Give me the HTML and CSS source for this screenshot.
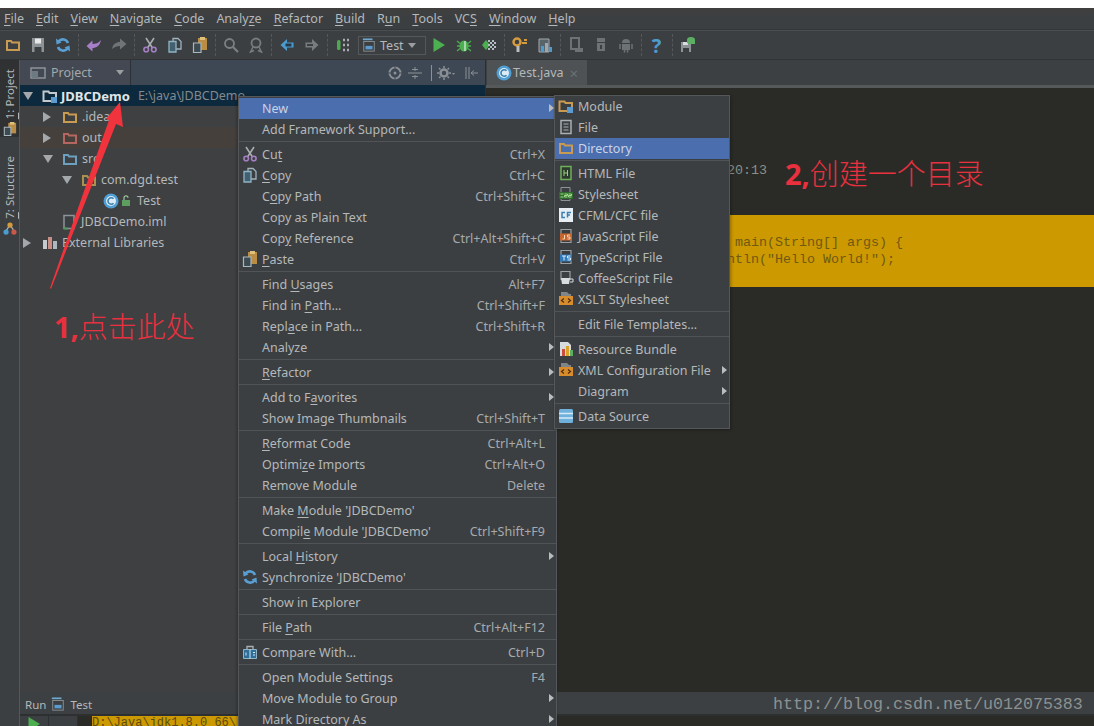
FILE: index.html
```html
<!DOCTYPE html>
<html lang="en">
<head>
    <meta charset="UTF-8">
    <meta name="viewport" content="width=device-width, initial-scale=1.0">
    <title>JDBCDemo - Test.java</title>
    <link rel="stylesheet" href="styles.css">
</head>
<body>
    <svg class="defs" aria-hidden="true">
        <symbol id="i-folder" viewBox="0 0 16 16"><path d="M2 4h4l1 1.5h7V13H2z" fill="none" stroke="currentColor" stroke-width="2"/></symbol>
        <symbol id="i-module" viewBox="0 0 16 16"><path d="M1.5 3.5h5l1 1.5h6.500v8h-12.500z" fill="none" stroke="currentColor" stroke-width="2"/><rect x="9" y="9" width="6" height="6" fill="#5b9bd0"/></symbol>
        <symbol id="i-file" viewBox="0 0 16 16"><path d="M3 1.500h10v13H3z" fill="#3c3f41" stroke="#a9b0b5" stroke-width="1.500"/><path d="M5.500 5h5M5.500 8h5M5.500 11h5" stroke="#a9b0b5"/></symbol>
        <symbol id="i-iml" viewBox="0 0 16 16"><path d="M3 1.500h10v13H3z" fill="#3c3f41" stroke="#8d9498" stroke-width="1.500"/><path d="M3 14.500h4" stroke="#4e9b58" stroke-width="2"/></symbol>
        <symbol id="i-class" viewBox="0 0 16 16"><circle cx="8" cy="8" r="7.500" fill="#4f9fd4"/><circle cx="8" cy="8" r="5" fill="#dcecf6"/><path d="M10.500 5.800a3.200 3.200 0 1 0 0 4.400" fill="none" stroke="#3a7fae" stroke-width="1.600"/></symbol>
        <symbol id="i-lock" viewBox="0 0 12 12"><rect x="2" y="5" width="8" height="6" fill="#5e9e60"/><path d="M4 5V2.800a2 2 0 0 1 4 0" fill="none" stroke="#9cc79b" stroke-width="1.200"/></symbol>
        <symbol id="i-libs" viewBox="0 0 16 16"><rect x="1" y="5" width="4" height="9" fill="#c4ccd2"/><rect x="6" y="2" width="4" height="12" fill="#c88f86"/><rect x="11" y="6" width="4" height="8" fill="#aeb8bf"/></symbol>
        <symbol id="i-cut" viewBox="0 0 16 16"><path d="M4 1l6.500 10M12 1L5.500 11" stroke="#a9adb0" stroke-width="1.600"/><circle cx="4.200" cy="12.500" r="2.300" fill="none" stroke="#a57fc4" stroke-width="1.600"/><circle cx="11.800" cy="12.500" r="2.300" fill="none" stroke="#a57fc4" stroke-width="1.600"/></symbol>
        <symbol id="i-copy" viewBox="0 0 16 16"><path d="M6 1.500h5l3 3V12H6z" fill="#3c3f41" stroke="#9fb2bd" stroke-width="1.300"/><path d="M2 4.500h7V15H2z" fill="#42606f" stroke="#8fb4c6" stroke-width="1.300"/></symbol>
        <symbol id="i-paste" viewBox="0 0 16 16"><rect x="6" y="1" width="9" height="12" fill="#b98d45"/><rect x="8" y="0" width="5" height="3" fill="#e0c078"/><path d="M1.500 6h7.500v9.500H1.500z" fill="#3c4a52" stroke="#a9b7be" stroke-width="1.200"/></symbol>
        <symbol id="i-find" viewBox="0 0 16 16"><circle cx="6.500" cy="6.500" r="4.500" fill="none" stroke="#7b8084" stroke-width="1.800"/><path d="M10 10l5 5" stroke="#7b8084" stroke-width="2.200"/></symbol>
        <symbol id="i-usages" viewBox="0 0 16 16"><circle cx="8" cy="6" r="4.500" fill="none" stroke="#777c80" stroke-width="1.800"/><path d="M5 10l-2.500 5 3.500-1.500M11 10l2.500 5-3.500-1.500" fill="none" stroke="#777c80" stroke-width="1.500"/></symbol>
        <symbol id="i-back" viewBox="0 0 16 16"><path d="M8 2L1.500 8 8 14v-3.500h6.500v-5H8z" fill="#4d9ccf"/><path d="M6.500 6.500h6v3h-6z" fill="#24394a"/></symbol>
        <symbol id="i-forward" viewBox="0 0 16 16"><path d="M8 2l6.500 6L8 14v-3.500H1.500v-5H8z" fill="#777c80"/><path d="M3 7h6v2H3z" fill="#3c3f41"/></symbol>
        <symbol id="i-undo" viewBox="0 0 16 16"><path d="M15 3C14 9 10 11 6.500 11V14.500L.5 9l6-5.500V7C9.500 7 12.500 6 15 3z" fill="#a77fc8"/></symbol>
        <symbol id="i-redo" viewBox="0 0 16 16"><path d="M1 12c1-5 4-7 8-7V1.500L15.500 7 9 12.500V9c-3 0-5.500 1-8 3z" fill="#6f7477"/></symbol>
        <symbol id="i-sync" viewBox="0 0 16 16"><path d="M13 6A5.500 5.500 0 0 0 3.500 4.500M3 10a5.500 5.500 0 0 0 9.500 1.500" fill="none" stroke="#5a9fd4" stroke-width="2.600"/><path d="M1 1.500l.5 6 5-2zM15 14.500l-.5-6-5 2z" fill="#5a9fd4"/></symbol>
        <symbol id="i-save" viewBox="0 0 16 16"><path d="M2 1h12v14H2z" fill="#8d9296"/><rect x="5" y="1.500" width="6" height="5" fill="#e8e8e8"/><rect x="4.500" y="10" width="7" height="5" fill="#3c3f41"/></symbol>
        <symbol id="i-build" viewBox="0 0 16 16"><rect x="1" y="3" width="3.500" height="10" rx="1.500" fill="#4ea84e"/><path d="M7 3h2M11 3h2M7 8h2M11 8h2M7 13h2M11 13h2" stroke="#a9adb0" stroke-width="2.500"/></symbol>
        <symbol id="i-run" viewBox="0 0 16 16"><path d="M2.500 1v14L14 8z" fill="#4caf50"/></symbol>
        <symbol id="i-debug" viewBox="0 0 16 16"><ellipse cx="8" cy="9" rx="4.500" ry="5.500" fill="#4caf50"/><path d="M1 4l3 2.500M15 4l-3 2.500M1 9h3M12 9h3M1 14l3-2.500M15 14l-3-2.500" stroke="#4caf50" stroke-width="1.300"/><path d="M9 4v10" stroke="#c7e3c8" stroke-width="1.500"/></symbol>
        <symbol id="i-cover" viewBox="0 0 16 16"><path d="M1 8l4-5 4 5-4 5z" fill="#4caf50"/><path d="M7 3h2v2H7zM11 3h2v2h-2zM9 5h2v2H9zM13 5h2v2h-2zM7 7h2v2H7zM11 7h2v2h-2zM9 9h2v2H9zM13 9h2v2h-2zM7 11h2v2H7zM11 11h2v2h-2z" fill="#b5bcc2"/></symbol>
        <symbol id="i-wrench" viewBox="0 0 16 16"><circle cx="5" cy="5" r="3.500" fill="none" stroke="#d49a3e" stroke-width="2.500"/><path d="M6 9v6" stroke="#b9bdbf" stroke-width="3"/><path d="M10 6h5M12 3h3" stroke="#d49a3e" stroke-width="2"/></symbol>
        <symbol id="i-struct" viewBox="0 0 16 16"><path d="M2 2h10v13H2z" fill="#59636a" stroke="#a0a8ad"/><rect x="4" y="9" width="3" height="6" fill="#4d9ccf"/><rect x="8" y="6" width="3" height="9" fill="#a0a8ad"/><rect x="12" y="10" width="3" height="5" fill="#4d9ccf"/></symbol>
        <symbol id="i-struct-tab" viewBox="0 0 16 16"><path d="M3 11L8 3l5 8" fill="none" stroke="#a9adb0" stroke-width="1.500"/><circle cx="8" cy="3.500" r="3" fill="#d49a3e"/><circle cx="3.500" cy="11.500" r="3" fill="#4d9ccf"/><circle cx="12.500" cy="11.500" r="3" fill="#c9594a"/></symbol>
        <symbol id="i-sdk" viewBox="0 0 16 16"><path d="M3 1h8v11H3z" fill="none" stroke="#6d7275" stroke-width="2"/><rect x="7" y="11" width="8" height="4" fill="#6d7275"/></symbol>
        <symbol id="i-droid1" viewBox="0 0 16 16"><path d="M4 1h8v4H4z" fill="#6d7275"/><rect x="4" y="6" width="8" height="8" fill="#6d7275"/><path d="M7 8h2v4H7z" fill="#3c3f41"/></symbol>
        <symbol id="i-droid2" viewBox="0 0 16 16"><path d="M4 6a4 4 0 0 1 8 0z" fill="#6d7275"/><rect x="4" y="7" width="8" height="6" fill="#6d7275"/><path d="M2 7v5M14 7v5M6.500 13v2.500M9.500 13v2.500" stroke="#6d7275" stroke-width="1.500"/></symbol>
        <symbol id="i-savedroid" viewBox="0 0 16 16"><path d="M1 5h10v10H1z" fill="#8d9296"/><rect x="3" y="5" width="5" height="3" fill="#ddd"/><rect x="3" y="11" width="6" height="4" fill="#3c3f41"/><path d="M7 6V3a4 3 0 0 1 8 0v4H9z" fill="#5cae62"/></symbol>
        <symbol id="i-html" viewBox="0 0 16 16"><path d="M3 1.500h10v13H3z" fill="#2d3a2e" stroke="#6fae5a" stroke-width="1.500"/><path d="M6 5v6M9.500 5v6M6 8h3.500" stroke="#9ad27c"/></symbol>
        <symbol id="i-css" viewBox="0 0 16 16"><path d="M3 1.500h9v13H3z" fill="#3c3f41" stroke="#8d9498"/><rect x="1" y="6" width="14" height="7" fill="#2f6b2f"/><path d="M2.500 8h3M2.500 11h3M6.500 8h3v1.500h-3v1.500h3M10.500 8h3v1.500h-3v1.500h3" fill="none" stroke="#a5e08c"/></symbol>
        <symbol id="i-cfml" viewBox="0 0 16 16"><rect x="1" y="1" width="14" height="14" fill="#e6eef4"/><path d="M7 5.500H4v5h3M9.500 10.500v-5H13M9.500 8H12" fill="none" stroke="#3c7fb0" stroke-width="1.500"/></symbol>
        <symbol id="i-js" viewBox="0 0 16 16"><path d="M3 1.500h10v13H3z" fill="#3c3f41" stroke="#9a9fa3" stroke-width="1.200"/><rect x="2" y="5.500" width="12" height="7" fill="#c8652c"/><path d="M6.500 7v4H4.500M12 7H9.500v2H12v2H9.500" fill="none" stroke="#f2d6b8"/></symbol>
        <symbol id="i-ts" viewBox="0 0 16 16"><path d="M3 1.500h10v13H3z" fill="#3c3f41" stroke="#9a9fa3" stroke-width="1.200"/><rect x="2" y="5.500" width="12" height="7" fill="#2f79b8"/><path d="M4 7h4M6 7v4.500M12.500 7H9.500v2h3v2h-3" fill="none" stroke="#d9ecfa"/></symbol>
        <symbol id="i-coffee" viewBox="0 0 16 16"><path d="M3 1.500h9v8H3z" fill="#3c3f41" stroke="#9a9fa3" stroke-width="1.200"/><path d="M3 8h9l-1 6H4z" fill="#d7dcdf"/><path d="M12 9h3v3h-3" fill="none" stroke="#d7dcdf"/></symbol>
        <symbol id="i-xslt" viewBox="0 0 16 16"><path d="M3 1h6l2 2h2v3H3z" fill="#7f8589"/><rect x="1" y="5" width="14" height="9" fill="#d98c2b"/><path d="M6 7.500L3.500 9.500 6 11.500M10 7.500l2.500 2-2.500 2" fill="none" stroke="#4a2c0c" stroke-width="1.200"/></symbol>
        <symbol id="i-bundle" viewBox="0 0 16 16"><path d="M2 1h8l3 3v11H2z" fill="#d7dcdf"/><rect x="4" y="8" width="3" height="7" fill="#c94f3c"/><rect x="8" y="5" width="3" height="10" fill="#d9a32c"/><rect x="12" y="9" width="3" height="6" fill="#5cae62"/></symbol>
        <symbol id="i-db" viewBox="0 0 16 16"><rect x="1" y="1" width="14" height="14" rx="1.500" fill="#6fb0dc"/><path d="M1 5.500h14M1 10h14" stroke="#d6ebf8" stroke-width="1.500"/></symbol>
        <symbol id="i-compare" viewBox="0 0 16 16"><path d="M5 5V2.500h6V5" fill="none" stroke="#a9b0b5" stroke-width="1.300"/><path d="M1.500 5.500h13v9h-13z" fill="#2f6f9a" stroke="#8fb4c6"/><path d="M8 5.500v9M4 8.500v3M11 8.500h2M11 11h2" stroke="#d6ebf8"/></symbol>
        <symbol id="i-project" viewBox="0 0 16 16"><path d="M1 3h14v10H1z" fill="none" stroke="#8d9498" stroke-width="1.500"/><rect x="2" y="6" width="6" height="7" fill="#6e7a82"/></symbol>
        <symbol id="i-term" viewBox="0 0 16 16"><path d="M1 1.500h11" stroke="#6ea6cc" stroke-width="2"/><rect x="2" y="4" width="12" height="11" fill="none" stroke="#8d9498"/><rect x="4" y="9" width="8" height="4" fill="#5b9bd0"/></symbol>
        <symbol id="i-target" viewBox="0 0 14 14"><circle cx="7" cy="7" r="5.500" fill="none" stroke="#8b9095" stroke-width="2"/><path d="M7 0v14M0 7h14" stroke="#3e4855"/><circle cx="7" cy="7" r="1.500" fill="#8b9095"/></symbol>
        <symbol id="i-collapse" viewBox="0 0 14 14"><path d="M0 7h14M7 1v4M7 9v4M4 3.500h6M4 10.500h6" stroke="#8b9095"/></symbol>
        <symbol id="i-gear" viewBox="0 0 18 14"><circle cx="7" cy="7" r="3.500" fill="none" stroke="#8b9095" stroke-width="2.500"/><path d="M7 0v14M0 7h14M2 2l10 10M12 2L2 12" stroke="#8b9095" stroke-width="1.500" stroke-dasharray="2 10"/><path d="M15 7h3l-1.500 2z" fill="#8b9095"/></symbol>
        <symbol id="i-hide" viewBox="0 0 14 14"><path d="M2 1v12M5 1v12M7 7h7M7 7l3-2.500M7 7l3 2.500" fill="none" stroke="#8b9095"/></symbol>
    </svg>

    <div class="menubar">
        <span><u>F</u>ile</span>
        <span><u>E</u>dit</span>
        <span><u>V</u>iew</span>
        <span><u>N</u>avigate</span>
        <span><u>C</u>ode</span>
        <span>Analy<u>z</u>e</span>
        <span><u>R</u>efactor</span>
        <span><u>B</u>uild</span>
        <span>R<u>u</u>n</span>
        <span><u>T</u>ools</span>
        <span>VC<u>S</u></span>
        <span><u>W</u>indow</span>
        <span><u>H</u>elp</span>
    </div>

    <div class="toolbar">
        <span class="tb"><svg class="ic ic-orange"><use href="#i-folder"/></svg></span>
        <span class="tb"><svg class="ic"><use href="#i-save"/></svg></span>
        <span class="tb"><svg class="ic"><use href="#i-sync"/></svg></span>
        <span class="tb-sep"></span>
        <span class="tb"><svg class="ic"><use href="#i-undo"/></svg></span>
        <span class="tb"><svg class="ic"><use href="#i-redo"/></svg></span>
        <span class="tb-sep"></span>
        <span class="tb"><svg class="ic"><use href="#i-cut"/></svg></span>
        <span class="tb"><svg class="ic"><use href="#i-copy"/></svg></span>
        <span class="tb"><svg class="ic"><use href="#i-paste"/></svg></span>
        <span class="tb-sep"></span>
        <span class="tb"><svg class="ic"><use href="#i-find"/></svg></span>
        <span class="tb"><svg class="ic"><use href="#i-usages"/></svg></span>
        <span class="tb-sep"></span>
        <span class="tb"><svg class="ic"><use href="#i-back"/></svg></span>
        <span class="tb"><svg class="ic"><use href="#i-forward"/></svg></span>
        <span class="tb-sep"></span>
        <span class="tb tb-build"><svg class="ic"><use href="#i-build"/></svg></span>
        <span class="run-config"><svg class="ic-small"><use href="#i-term"/></svg>Test<i class="caret"></i></span>
        <span class="tb"><svg class="ic"><use href="#i-run"/></svg></span>
        <span class="tb"><svg class="ic"><use href="#i-debug"/></svg></span>
        <span class="tb"><svg class="ic"><use href="#i-cover"/></svg></span>
        <span class="tb-sep"></span>
        <span class="tb"><svg class="ic"><use href="#i-wrench"/></svg></span>
        <span class="tb"><svg class="ic"><use href="#i-struct"/></svg></span>
        <span class="tb-sep"></span>
        <span class="tb"><svg class="ic"><use href="#i-sdk"/></svg></span>
        <span class="tb"><svg class="ic"><use href="#i-droid1"/></svg></span>
        <span class="tb"><svg class="ic"><use href="#i-droid2"/></svg></span>
        <span class="tb-sep"></span>
        <span class="tb help">?</span>
        <span class="tb-sep"></span>
        <span class="tb"><svg class="ic"><use href="#i-savedroid"/></svg></span>
    </div>

    <div class="work">
        <div class="strip">
            <div class="strip-tab active">
                <span class="vtext"><u>1</u>: Project</span>
                <svg class="ic-small"><use href="#i-paste"/></svg>
            </div>
            <div class="strip-tab">
                <span class="vtext"><u>7</u>: Structure</span>
                <svg class="ic-small"><use href="#i-struct-tab"/></svg>
            </div>
        </div>

        <div class="center">
            <div class="panes">
                <div class="project">
                    <div class="project-head">
                        <div class="combo">
                            <svg class="ic"><use href="#i-project"/></svg>
                            <span>Project</span>
                            <i class="caret"></i>
                        </div>
                        <div class="head-tools">
                            <svg class="tool"><use href="#i-target"/></svg>
                            <svg class="tool"><use href="#i-collapse"/></svg>
                            <span class="tool-sep"></span>
                            <svg class="tool tool-wide"><use href="#i-gear"/></svg>
                            <svg class="tool"><use href="#i-hide"/></svg>
                        </div>
                    </div>
                    <div class="tree">
                        <div class="row selected lvl0"><i class="tri down"></i><svg class="ic ic-white"><use href="#i-module"/></svg><b>JDBCDemo</b><span class="path">E:\java\JDBCDemo</span></div>
                        <div class="row lvl1"><i class="tri"></i><svg class="ic ic-orange"><use href="#i-folder"/></svg><span>.idea</span></div>
                        <div class="row lvl1 excluded"><i class="tri"></i><svg class="ic ic-red"><use href="#i-folder"/></svg><span>out</span></div>
                        <div class="row lvl1"><i class="tri down"></i><svg class="ic ic-blue"><use href="#i-folder"/></svg><span>src</span></div>
                        <div class="row lvl2"><i class="tri down"></i><svg class="ic ic-olive"><use href="#i-folder"/></svg><span>com.dgd.test</span></div>
                        <div class="row lvl3"><svg class="ic"><use href="#i-class"/></svg><svg class="ic-lock"><use href="#i-lock"/></svg><span>Test</span></div>
                        <div class="row lvl-file"><svg class="ic"><use href="#i-iml"/></svg><span>JDBCDemo.iml</span></div>
                        <div class="row lvl0"><i class="tri"></i><svg class="ic"><use href="#i-libs"/></svg><span>External Libraries</span></div>
                    </div>
                </div>
                <div class="editor">
                    <div class="tabs">
                        <div class="tab"><svg class="ic"><use href="#i-class"/></svg><span>Test.java</span><span class="tab-x">×</span></div>
                    </div>
                    <div class="code">
                        <div class="stamp">20:13</div>
                        <pre class="highlight"> main(String[] args) {
ntln("Hello World!");</pre>
                    </div>
                </div>
            </div>
            <div class="runbar">
                <span>Run</span>
                <svg class="ic-small"><use href="#i-term"/></svg>
                <span>Test</span>
            </div>
            <div class="console">
                <span class="con-btn"><svg class="ic"><use href="#i-run"/></svg></span>
                <span class="con-btn"></span>
                <span class="con-gap"></span>
                <span class="con-line">D:\Java\jdk1.8.0_66\</span>
            </div>
        </div>
    </div>

    <!-- context menu -->
    <div class="menu main-menu">
        <div class="item on"><span class="label">New</span><i class="arrow"></i></div>
        <div class="item"><span class="label">Add Framework Support...</span></div>
        <div class="sep"></div>
        <div class="item"><svg class="ic item-ic"><use href="#i-cut"/></svg><span class="label">Cu<u>t</u></span><span class="key">Ctrl+X</span></div>
        <div class="item"><svg class="ic item-ic"><use href="#i-copy"/></svg><span class="label"><u>C</u>opy</span><span class="key">Ctrl+C</span></div>
        <div class="item"><span class="label">C<u>o</u>py Path</span><span class="key">Ctrl+Shift+C</span></div>
        <div class="item"><span class="label">Copy as Plain Text</span></div>
        <div class="item"><span class="label">Cop<u>y</u> Reference</span><span class="key">Ctrl+Alt+Shift+C</span></div>
        <div class="item"><svg class="ic item-ic"><use href="#i-paste"/></svg><span class="label"><u>P</u>aste</span><span class="key">Ctrl+V</span></div>
        <div class="sep"></div>
        <div class="item"><span class="label">Find <u>U</u>sages</span><span class="key">Alt+F7</span></div>
        <div class="item"><span class="label">Find in <u>P</u>ath...</span><span class="key">Ctrl+Shift+F</span></div>
        <div class="item"><span class="label">Repl<u>a</u>ce in Path...</span><span class="key">Ctrl+Shift+R</span></div>
        <div class="item"><span class="label">Analyze</span><i class="arrow"></i></div>
        <div class="sep"></div>
        <div class="item"><span class="label"><u>R</u>efactor</span><i class="arrow"></i></div>
        <div class="sep"></div>
        <div class="item"><span class="label">Add to F<u>a</u>vorites</span><i class="arrow"></i></div>
        <div class="item"><span class="label">Show Image Thumbnails</span><span class="key">Ctrl+Shift+T</span></div>
        <div class="sep"></div>
        <div class="item"><span class="label"><u>R</u>eformat Code</span><span class="key">Ctrl+Alt+L</span></div>
        <div class="item"><span class="label">Optimi<u>z</u>e Imports</span><span class="key">Ctrl+Alt+O</span></div>
        <div class="item"><span class="label">Remove Module</span><span class="key">Delete</span></div>
        <div class="sep"></div>
        <div class="item"><span class="label">Make <u>M</u>odule 'JDBCDemo'</span></div>
        <div class="item"><span class="label">Compil<u>e</u> Module 'JDBCDemo'</span><span class="key">Ctrl+Shift+F9</span></div>
        <div class="sep"></div>
        <div class="item"><span class="label">Local <u>H</u>istory</span><i class="arrow"></i></div>
        <div class="item"><svg class="ic item-ic"><use href="#i-sync"/></svg><span class="label">Synchronize 'JDBCDemo'</span></div>
        <div class="sep"></div>
        <div class="item"><span class="label">Show in Explorer</span></div>
        <div class="sep"></div>
        <div class="item"><span class="label">File <u>P</u>ath</span><span class="key">Ctrl+Alt+F12</span></div>
        <div class="sep"></div>
        <div class="item"><svg class="ic item-ic"><use href="#i-compare"/></svg><span class="label">Compare With...</span><span class="key">Ctrl+D</span></div>
        <div class="sep"></div>
        <div class="item"><span class="label">Open Module Settings</span><span class="key">F4</span></div>
        <div class="item"><span class="label">Move Module to Group</span><i class="arrow"></i></div>
        <div class="item"><span class="label">Mark Directory As</span><i class="arrow"></i></div>
    </div>

    <!-- New submenu -->
    <div class="menu sub-menu">
        <div class="item"><svg class="ic item-ic ic-orange"><use href="#i-module"/></svg><span class="label">Module</span></div>
        <div class="item"><svg class="ic item-ic"><use href="#i-file"/></svg><span class="label">File</span></div>
        <div class="item on"><svg class="ic item-ic ic-orange"><use href="#i-folder"/></svg><span class="label">Directory</span></div>
        <div class="sep"></div>
        <div class="item"><svg class="ic item-ic"><use href="#i-html"/></svg><span class="label">HTML File</span></div>
        <div class="item"><svg class="ic item-ic"><use href="#i-css"/></svg><span class="label">Stylesheet</span></div>
        <div class="item"><svg class="ic item-ic"><use href="#i-cfml"/></svg><span class="label">CFML/CFC file</span></div>
        <div class="item"><svg class="ic item-ic"><use href="#i-js"/></svg><span class="label">JavaScript File</span></div>
        <div class="item"><svg class="ic item-ic"><use href="#i-ts"/></svg><span class="label">TypeScript File</span></div>
        <div class="item"><svg class="ic item-ic"><use href="#i-coffee"/></svg><span class="label">CoffeeScript File</span></div>
        <div class="item"><svg class="ic item-ic"><use href="#i-xslt"/></svg><span class="label">XSLT Stylesheet</span></div>
        <div class="sep"></div>
        <div class="item"><span class="label">Edit File Templates...</span></div>
        <div class="sep"></div>
        <div class="item"><svg class="ic item-ic"><use href="#i-bundle"/></svg><span class="label">Resource Bundle</span></div>
        <div class="item"><svg class="ic item-ic"><use href="#i-xslt"/></svg><span class="label">XML Configuration File</span><i class="arrow"></i></div>
        <div class="item"><span class="label">Diagram</span><i class="arrow"></i></div>
        <div class="sep"></div>
        <div class="item"><svg class="ic item-ic"><use href="#i-db"/></svg><span class="label">Data Source</span></div>
    </div>

    <!-- annotations drawn on top of the screenshot -->
    <svg class="red-arrow" viewBox="0 0 80 195"><polygon points="71,1 74,26 67,23 2,188 1,187 60,19 57,18" fill="#f0333c"/></svg>
    <div class="note note-1"><b>1,</b>点击此处</div>
    <div class="note note-2"><b>2,</b>创建一个目录</div>
    <div class="watermark">http://blog.csdn.net/u012075383</div>
</body>
</html>
```

FILE: styles.css
```css
* {
    box-sizing: border-box;
}
html, body {
    height: 100%;
}
body {
    margin: 0;
    padding-top: 8px;
    overflow: hidden;
    background: #fff;
    color: #b4b8ba;
    font-family: "Noto Sans", Arial, sans-serif;
    font-size: 12.5px;
    display: flex;
    flex-direction: column;
}
.defs {
    display: none;
}
u {
    text-underline-offset: 2px;
}
.ic {
    width: 16px;
    height: 16px;
    flex: none;
}
.ic-small {
    width: 14px;
    height: 14px;
    flex: none;
}
.ic-orange { color: #c99a52; }
.ic-red { color: #b5675f; }
.ic-blue { color: #6d9fbe; }
.ic-olive { color: #ab9150; }
.ic-white { color: #c3c9cd; }

/* menu bar */
.menubar {
    height: 22px;
    flex: none;
    display: flex;
    align-items: center;
    gap: 12px;
    padding-left: 4px;
    background: linear-gradient(#413f3e, #3c3f41 40%);
    border-bottom: 1px solid #34373a;
}

/* toolbar */
.toolbar {
    height: 30px;
    flex: none;
    display: flex;
    align-items: center;
    background: #3c3f41;
    border-top: 1px solid #4b4e50;
    border-bottom: 1px solid #313335;
}
.tb {
    width: 25px;
    height: 24px;
    display: flex;
    align-items: center;
    justify-content: center;
    flex: none;
}
.tb-sep {
    width: 3px;
    height: 22px;
    flex: none;
    border-left: 1px dashed #55585a;
    margin-left: 3px;
}
.tb-build {
    width: 22px;
    margin-left: 3px;
}
.help {
    color: #4d9ccf;
    font-size: 20px;
    font-weight: bold;
}
.run-config {
    width: 68px;
    height: 19px;
    margin: 0 0 0 3px;
    padding: 0 3px;
    display: flex;
    align-items: center;
    gap: 4px;
    flex: none;
    border: 1px solid #55585a;
    color: #b4b8ba;
}
.caret {
    display: inline-block;
    width: 0;
    height: 0;
    border-left: 4px solid transparent;
    border-right: 4px solid transparent;
    border-top: 5px solid #9a9ea1;
}

/* main area */
.work {
    flex: 1;
    display: flex;
    min-height: 0;
}
.strip {
    width: 20px;
    flex: none;
    background: #3c3f41;
    border-right: 1px solid #55585a;
    display: flex;
    flex-direction: column;
}
.strip-tab {
    display: flex;
    flex-direction: column;
    align-items: center;
    gap: 3px;
    padding: 9px 0 2px;
}
.strip-tab.active {
    background: #2f3133;
    height: 77px;
    margin-bottom: 10px;
}
.vtext {
    writing-mode: vertical-rl;
    transform: rotate(180deg);
    font-size: 11.5px;
    line-height: 19px;
    white-space: nowrap;
    flex: none;
}
.center {
    flex: 1;
    min-width: 0;
    display: flex;
    flex-direction: column;
}
.panes {
    flex: 1;
    min-height: 0;
    display: flex;
}

/* project panel */
.project {
    width: 466px;
    flex: none;
    background: #3e4042;
    border-right: 1px solid #2d2f30;
}
.project-head {
    height: 25px;
    display: flex;
    align-items: center;
    background: #3e4855;
}
.combo {
    width: 111px;
    height: 100%;
    padding: 0 5px 0 10px;
    display: flex;
    align-items: center;
    gap: 5px;
    color: #a4a9ac;
    background: #434852;
    border-right: 1px solid #2c3138;
}
.combo .caret {
    margin-left: auto;
    margin-right: 1px;
}
.head-tools {
    margin-left: auto;
    padding-right: 7px;
    display: flex;
    align-items: center;
    gap: 6px;
}
.tool {
    width: 14px;
    height: 14px;
    flex: none;
}
.tool-wide {
    width: 18px;
    margin-right: 3px;
}
.tool-sep {
    width: 1px;
    height: 16px;
    background: #8b9095;
    margin: 0 -1px 0 3px;
}
.row {
    height: 21px;
    display: flex;
    align-items: center;
    white-space: nowrap;
    color: #b4b8ba;
}
.row.selected {
    background: #0d293e;
}
.row.selected b {
    color: #e2e6e8;
    margin-left: 3px;
    font-size: 13px;
}
.row.excluded {
    background: #45403b;
}
.path {
    margin-left: 8px;
    color: #83898d;
}
.tri {
    width: 0;
    height: 0;
    flex: none;
    border-top: 5px solid transparent;
    border-bottom: 5px solid transparent;
    border-left: 8px solid #a4a8ab;
    margin-right: 11px;
}
.tri.down {
    border-left: 5px solid transparent;
    border-right: 5px solid transparent;
    border-top: 8px solid #a4a8ab;
    border-bottom: 0;
    margin-right: 9px;
}
.lvl0 { padding-left: 3px; }
.lvl1 { padding-left: 23px; }
.lvl2 { padding-left: 42px; }
.lvl3 { padding-left: 83px; }
.lvl-file { padding-left: 41px; }
.row > .ic + span {
    margin-left: 4px;
}
.ic-lock {
    width: 12px;
    height: 12px;
    margin: 0 5px 0 1px;
    flex: none;
}

/* editor */
.editor {
    flex: 1;
    min-width: 0;
    display: flex;
    flex-direction: column;
    background: #2a2b26;
}
.tabs {
    height: 28px;
    flex: none;
    padding-left: 1px;
    background: #3d4042;
    border-bottom: 3px solid #56595a;
}
.tab {
    width: 100px;
    height: 25px;
    padding-left: 9px;
    display: flex;
    align-items: center;
    gap: 1px;
    background: #4e5254;
}
.tab-x {
    margin-left: 5px;
    color: #6c7072;
    font-size: 15px;
}
.code {
    flex: 1;
    font-family: "Liberation Mono", monospace;
    font-size: 13.33px;
}
.stamp {
    padding: 75px 0 0 241px;
    height: 127px;
    color: #8c8e88;
}
.highlight {
    margin: 0;
    height: 72px;
    padding: 19px 0 0 241px;
    line-height: 17px;
    background: #cc9900;
    color: #6f5a14;
    font-family: inherit;
    font-size: inherit;
}

/* bottom */
.runbar {
    height: 22px;
    flex: none;
    display: flex;
    align-items: center;
    gap: 5px;
    padding: 2px 0 0 5px;
    background: #3c4042;
    font-size: 11.5px;
}
.console {
    height: 12px;
    flex: none;
    display: flex;
    background: #2a2b26;
    border-top: 2px solid #2d2f30;
    overflow: hidden;
}
.con-btn {
    width: 29px;
    background: #3c3f41;
    border-right: 1px solid #2d2f30;
    padding-left: 6px;
}
.con-gap {
    width: 14px;
}
.con-line {
    width: 146px;
    background: #cc9900;
    color: #5c4a10;
    font-family: "Liberation Mono", monospace;
    font-size: 12px;
    line-height: 14px;
    white-space: nowrap;
}

/* popup menus */
.menu {
    position: absolute;
    background: #3c3f41;
    border: 1px solid #55585a;
    color: #b4b8ba;
}
.main-menu {
    left: 238px;
    top: 96px;
    width: 319px;
    padding: 1px 0;
    box-shadow: -1px 0 3px rgba(0, 0, 0, 0.3);
}
.sub-menu {
    left: 554px;
    top: 95px;
    width: 176px;
    padding-bottom: 1px;
    box-shadow: 1px 1px 3px rgba(0, 0, 0, 0.3);
}
.item {
    position: relative;
    height: 21px;
    padding: 0 11px 0 23px;
    display: flex;
    align-items: center;
    white-space: nowrap;
}
.item.on {
    background: #4b6eaf;
    color: #c9d3e6;
}
.item-ic {
    position: absolute;
    left: 3px;
    top: 2px;
}
.key {
    margin-left: auto;
    color: #a6aaad;
}
.arrow {
    position: absolute;
    right: 2px;
    top: 6px;
    width: 0;
    height: 0;
    border-top: 4px solid transparent;
    border-bottom: 4px solid transparent;
    border-left: 5px solid #b9bdbf;
}
.sep {
    height: 4px;
    padding-top: 1px;
}
.sep::before {
    content: "";
    display: block;
    height: 1px;
    background: #515456;
}

/* annotations */
.red-arrow {
    position: absolute;
    left: 49px;
    top: 101px;
    width: 80px;
    height: 195px;
}
.note {
    position: absolute;
    color: #e8303f;
    font-family: "Noto Sans CJK SC", sans-serif;
    font-size: 29px;
    font-weight: 300;
    line-height: 36px;
    white-space: nowrap;
}
.note b {
    font-family: "Noto Sans", sans-serif;
    font-weight: 700;
}
.note-1 {
    left: 54px;
    top: 307px;
}
.note-2 {
    left: 785px;
    top: 154px;
}
.watermark {
    position: absolute;
    left: 773px;
    top: 695px;
    color: #8d9090;
    font-family: "Liberation Mono", monospace;
    font-size: 16.67px;
    line-height: 20px;
}
```
